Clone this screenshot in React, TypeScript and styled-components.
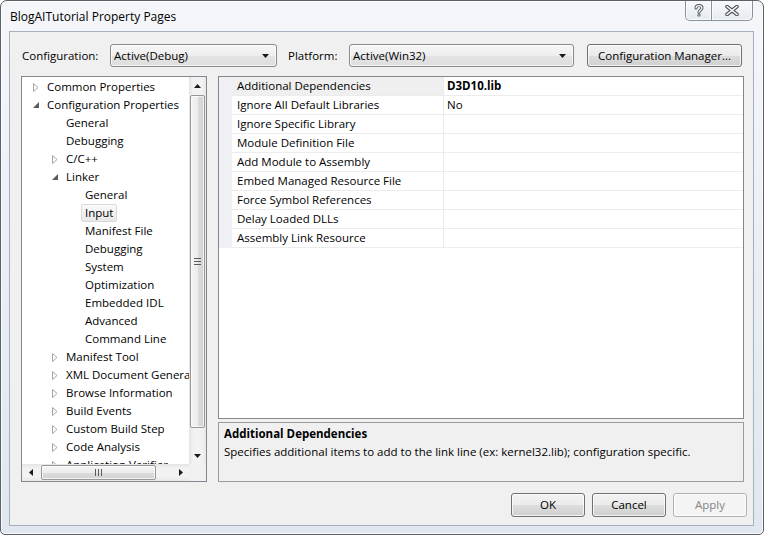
import styled, { createGlobalStyle } from 'styled-components'

const GlobalStyle = createGlobalStyle`
  html, body {
    margin: 0;
    padding: 0;
    background: #ffffff;
  }
  body {
    font-family: "Open Sans", "Noto Sans", sans-serif;
    font-size: 11.5px;
    color: #000;
  }
  * {
    box-sizing: border-box;
  }
`

const Window = styled.div`
  width: 764px;
  height: 535px;
  border: 1px solid #5b6169;
  border-radius: 7px 7px 5px 5px;
  background: linear-gradient(#f4f6fa, #e1e7ef);
  box-shadow: inset 0 0 0 1px rgba(255, 255, 255, 0.8);
  display: flex;
  flex-direction: column;
  overflow: hidden;
`

const TitleBar = styled.div`
  height: 30px;
  flex: none;
  display: flex;
  justify-content: space-between;
  align-items: flex-start;
`

const Title = styled.div`
  padding: 8px 0 0 9px;
  line-height: 16px;
  font-size: 12px;
`

const CaptionGroup = styled.div`
  display: flex;
  margin-right: 10px;
  margin-top: -1px;
`

const CaptionButton = styled.div<{ $w: number; $last?: boolean }>`
  width: ${p => p.$w}px;
  height: 21px;
  border: 1px solid #8c929b;
  border-top: none;
  border-left: ${p => (p.$last ? 'none' : '1px solid #8c929b')};
  border-radius: ${p => (p.$last ? '0 0 5px 0' : '0 0 0 5px')};
  background: linear-gradient(#f7f9fc, #e6ebf2);
  box-shadow: inset 0 0 0 1px rgba(255, 255, 255, 0.7);
  display: flex;
  align-items: center;
  justify-content: center;
  padding-top: 1px;
`

const Client = styled.div`
  flex: 1;
  margin: 0 9px 8px 8px;
  border: 1px solid #a6b0bc;
  background: #f0f0f0;
  display: flex;
  flex-direction: column;
`

const ConfigRow = styled.div`
  display: flex;
  align-items: center;
  height: 23px;
  margin-top: 12px;
  padding-left: 12px;
`

const FieldLabel = styled.span<{ $w: number; $gap?: number }>`
  width: ${p => p.$w}px;
  margin-left: ${p => p.$gap ?? 0}px;
  flex: none;
  white-space: nowrap;
`

const Combo = styled.div<{ $w: number }>`
  width: ${p => p.$w}px;
  height: 23px;
  flex: none;
  border: 1px solid #8a8a8a;
  border-radius: 3px;
  background: linear-gradient(#f7f7f7, #eeeeee 50%, #e4e4e4 51%, #dedede);
  box-shadow: inset 0 0 0 1px rgba(255, 255, 255, 0.7);
  display: flex;
  align-items: center;
  justify-content: space-between;
  padding: 0 7px 0 3px;
  line-height: 16px;
`

const PushButton = styled.div<{ $w: number; $gap?: number; $disabled?: boolean }>`
  width: ${p => p.$w}px;
  height: ${p => (p.$gap === undefined ? 24 : 23)}px;
  margin-left: ${p => p.$gap ?? 0}px;
  flex: none;
  border: 1px solid ${p => (p.$disabled ? '#adb2b5' : '#707070')};
  border-radius: 3px;
  background: ${p =>
    p.$disabled
      ? '#f4f4f4'
      : 'linear-gradient(#f2f2f2, #ebebeb 50%, #dddddd 51%, #cfcfcf)'};
  box-shadow: inset 0 0 0 1px rgba(255, 255, 255, 0.75);
  color: ${p => (p.$disabled ? '#838383' : '#000')};
  display: flex;
  align-items: center;
  justify-content: center;
  line-height: 16px;
`

const Main = styled.div`
  display: flex;
  height: 406px;
  margin-top: 9px;
  padding-left: 11px;
  gap: 11px;
`

const TreeBox = styled.div`
  width: 186px;
  flex: none;
  border: 1px solid #828790;
  background: #fff;
  display: grid;
  grid-template-columns: 1fr 17px;
  grid-template-rows: 1fr 17px;
  overflow: hidden;
`

const TreeList = styled.div`
  overflow: hidden;
  padding-top: 1px;
`

const TreeRow = styled.div<{ $level: number }>`
  height: 18px;
  display: flex;
  align-items: center;
  padding-left: ${p => 6 + p.$level * 19}px;
  white-space: nowrap;
`

const ExpandSlot = styled.span`
  width: 15px;
  flex: none;
  display: flex;
  align-items: center;
  justify-content: center;
`

const ItemLabel = styled.span<{ $selected?: boolean }>`
  height: 18px;
  line-height: 16px;
  padding: 0 3px;
  border: 1px solid ${p => (p.$selected ? '#d9d9d9' : 'transparent')};
  border-radius: 2px;
  background: ${p => (p.$selected ? 'linear-gradient(#fafafa, #e8e8e8)' : 'transparent')};
`

const VScroll = styled.div`
  display: flex;
  flex-direction: column;
  background: linear-gradient(to right, #e4e4e4, #f2f2f2 25%, #f2f2f2 75%, #e8e8e8);
`

const HScroll = styled.div`
  display: flex;
  background: linear-gradient(#e4e4e4, #f2f2f2 25%, #f2f2f2 75%, #e8e8e8);
`

const ScrollArrow = styled.div`
  width: 17px;
  height: 17px;
  flex: none;
  display: flex;
  align-items: center;
  justify-content: center;
`

const Track = styled.div<{ $horizontal?: boolean }>`
  flex: 1;
  display: flex;
  flex-direction: ${p => (p.$horizontal ? 'row' : 'column')};
  padding: ${p => (p.$horizontal ? '1px 0 1px 2px' : '1px 1px 0 1px')};
`

const Thumb = styled.div<{ $horizontal?: boolean; $size: number }>`
  ${p => (p.$horizontal ? 'width' : 'height')}: ${p => p.$size}px;
  flex: none;
  border: 1px solid #979797;
  border-radius: 2px;
  background: ${p =>
    p.$horizontal
      ? 'linear-gradient(#f5f5f5, #ececec 50%, #dcdcdc 51%, #d2d2d2)'
      : 'linear-gradient(to right, #f5f5f5, #ececec 50%, #dcdcdc 51%, #d2d2d2)'};
  box-shadow: inset 0 0 0 1px rgba(255, 255, 255, 0.7);
  display: flex;
  align-items: center;
  justify-content: center;
`

const Corner = styled.div`
  background: #f0f0f0;
`

const RightColumn = styled.div`
  width: 526px;
  flex: none;
  display: flex;
  flex-direction: column;
  gap: 3px;
`

const PropGrid = styled.div`
  height: 343px;
  flex: none;
  border: 1px solid #828790;
  background: #fff;
`

const PropRow = styled.div`
  display: grid;
  grid-template-columns: 13px 211px 1fr;
  height: 19px;
`

const Gutter = styled.div`
  background: #eef0f3;
`

const PropName = styled.div<{ $selected?: boolean }>`
  border-bottom: 1px solid #ececec;
  background: ${p => (p.$selected ? '#efefef' : '#fff')};
  padding-left: 5px;
  line-height: 18px;
  white-space: nowrap;
`

const PropValue = styled.div<{ $bold?: boolean }>`
  border-bottom: 1px solid #ececec;
  border-left: 1px solid #ececec;
  padding-left: 3px;
  line-height: 18px;
  font-weight: ${p => (p.$bold ? 700 : 400)};
`

const Description = styled.div`
  height: 60px;
  flex: none;
  border: 1px solid #9c9c9c;
  padding: 2px 6px 0 5px;
  line-height: 18px;
`

const DescTitle = styled.div`
  font-weight: 700;
`

const ButtonRow = styled.div`
  display: flex;
  justify-content: flex-end;
  gap: 7px;
  margin-top: 11px;
  padding-right: 6px;
`

type TreeItem = { label: string; level: number; state?: 'open' | 'closed'; selected?: boolean }

const treeItems: TreeItem[] = [
  { label: 'Common Properties', level: 0, state: 'closed' },
  { label: 'Configuration Properties', level: 0, state: 'open' },
  { label: 'General', level: 1 },
  { label: 'Debugging', level: 1 },
  { label: 'C/C++', level: 1, state: 'closed' },
  { label: 'Linker', level: 1, state: 'open' },
  { label: 'General', level: 2 },
  { label: 'Input', level: 2, selected: true },
  { label: 'Manifest File', level: 2 },
  { label: 'Debugging', level: 2 },
  { label: 'System', level: 2 },
  { label: 'Optimization', level: 2 },
  { label: 'Embedded IDL', level: 2 },
  { label: 'Advanced', level: 2 },
  { label: 'Command Line', level: 2 },
  { label: 'Manifest Tool', level: 1, state: 'closed' },
  { label: 'XML Document Generator', level: 1, state: 'closed' },
  { label: 'Browse Information', level: 1, state: 'closed' },
  { label: 'Build Events', level: 1, state: 'closed' },
  { label: 'Custom Build Step', level: 1, state: 'closed' },
  { label: 'Code Analysis', level: 1, state: 'closed' },
  { label: 'Application Verifier', level: 1, state: 'closed' },
]

const properties = [
  { name: 'Additional Dependencies', value: 'D3D10.lib', selected: true },
  { name: 'Ignore All Default Libraries', value: 'No' },
  { name: 'Ignore Specific Library', value: '' },
  { name: 'Module Definition File', value: '' },
  { name: 'Add Module to Assembly', value: '' },
  { name: 'Embed Managed Resource File', value: '' },
  { name: 'Force Symbol References', value: '' },
  { name: 'Delay Loaded DLLs', value: '' },
  { name: 'Assembly Link Resource', value: '' },
]

const Expander = ({ state }: { state?: 'open' | 'closed' }) => {
  if (state === 'closed')
    return (
      <svg width="6" height="9" viewBox="0 0 6 9">
        <path d="M0.5 0.5 L5 4.5 L0.5 8.5 Z" fill="#fff" stroke="#a6a6a6" />
      </svg>
    )
  if (state === 'open')
    return (
      <svg width="6" height="6" viewBox="0 0 6 6">
        <path d="M6 0 L6 6 L0 6 Z" fill="#5a5a5a" />
      </svg>
    )
  return null
}

const Arrow = ({ dir }: { dir: 'up' | 'down' | 'left' | 'right' }) => {
  const paths = {
    up: 'M0 4 L3.5 0 L7 4 Z',
    down: 'M0 0 L7 0 L3.5 4 Z',
    left: 'M4 0 L4 7 L0 3.5 Z',
    right: 'M0 0 L4 3.5 L0 7 Z',
  }
  const horiz = dir === 'left' || dir === 'right'
  return (
    <svg width={horiz ? 4 : 7} height={horiz ? 7 : 4} viewBox={horiz ? '0 0 4 7' : '0 0 7 4'}>
      <path d={paths[dir]} fill="#1a1a1a" />
    </svg>
  )
}

const Grip = ({ horizontal }: { horizontal?: boolean }) =>
  horizontal ? (
    <svg width="7" height="7" viewBox="0 0 7 7">
      <path d="M0.5 0 V7 M3.5 0 V7 M6.5 0 V7" stroke="#5a5a5a" strokeWidth="1" />
    </svg>
  ) : (
    <svg width="7" height="7" viewBox="0 0 7 7">
      <path d="M0 0.5 H7 M0 3.5 H7 M0 6.5 H7" stroke="#5a5a5a" strokeWidth="1" />
    </svg>
  )

const HelpGlyph = () => (
  <svg width="10" height="13" viewBox="0 0 10 13">
    <path
      d="M2 4 C2 0.8 8 0.8 8 4 C8 6 5 6 5 8.2"
      fill="none"
      stroke="#4b5058"
      strokeWidth="3"
      strokeLinecap="round"
    />
    <circle cx="5" cy="11" r="1.6" fill="#4b5058" />
    <path
      d="M2 4 C2 0.8 8 0.8 8 4 C8 6 5 6 5 8.2"
      fill="none"
      stroke="#fff"
      strokeWidth="1.2"
      strokeLinecap="round"
    />
    <circle cx="5" cy="11" r="0.7" fill="#fff" />
  </svg>
)

const CloseGlyph = () => (
  <svg width="14" height="11" viewBox="0 0 14 11">
    <path d="M2 1.5 L12 9.5 M12 1.5 L2 9.5" stroke="#4b5058" strokeWidth="3.6" strokeLinecap="round" />
    <path d="M2 1.5 L12 9.5 M12 1.5 L2 9.5" stroke="#fff" strokeWidth="1.6" strokeLinecap="round" />
  </svg>
)

const App = () => {
  return (
    <>
      <GlobalStyle />
      <Window>
        <TitleBar>
          <Title>BlogAITutorial Property Pages</Title>
          <CaptionGroup>
            <CaptionButton $w={27}>
              <HelpGlyph />
            </CaptionButton>
            <CaptionButton $w={41} $last>
              <CloseGlyph />
            </CaptionButton>
          </CaptionGroup>
        </TitleBar>
        <Client>
          <ConfigRow>
            <FieldLabel $w={88}>Configuration:</FieldLabel>
            <Combo $w={167}>
              <span>Active(Debug)</span>
              <Arrow dir="down" />
            </Combo>
            <FieldLabel $w={61} $gap={11}>
              Platform:
            </FieldLabel>
            <Combo $w={225}>
              <span>Active(Win32)</span>
              <Arrow dir="down" />
            </Combo>
            <PushButton $w={155} $gap={13}>
              Configuration Manager...
            </PushButton>
          </ConfigRow>

          <Main>
            <TreeBox>
              <TreeList>
                {treeItems.map((item, i) => (
                  <TreeRow key={i} $level={item.level}>
                    <ExpandSlot>
                      <Expander state={item.state} />
                    </ExpandSlot>
                    <ItemLabel $selected={item.selected}>{item.label}</ItemLabel>
                  </TreeRow>
                ))}
              </TreeList>
              <VScroll>
                <ScrollArrow>
                  <Arrow dir="up" />
                </ScrollArrow>
                <Track>
                  <Thumb $size={333}>
                    <Grip />
                  </Thumb>
                </Track>
                <ScrollArrow>
                  <Arrow dir="down" />
                </ScrollArrow>
              </VScroll>
              <HScroll>
                <ScrollArrow>
                  <Arrow dir="left" />
                </ScrollArrow>
                <Track $horizontal>
                  <Thumb $horizontal $size={115}>
                    <Grip horizontal />
                  </Thumb>
                </Track>
                <ScrollArrow>
                  <Arrow dir="right" />
                </ScrollArrow>
              </HScroll>
              <Corner />
            </TreeBox>

            <RightColumn>
              <PropGrid>
                {properties.map(p => (
                  <PropRow key={p.name}>
                    <Gutter />
                    <PropName $selected={p.selected}>{p.name}</PropName>
                    <PropValue $bold={p.selected}>{p.value}</PropValue>
                  </PropRow>
                ))}
              </PropGrid>
              <Description>
                <DescTitle>Additional Dependencies</DescTitle>
                <div>Specifies additional items to add to the link line (ex: kernel32.lib); configuration specific.</div>
              </Description>
            </RightColumn>
          </Main>

          <ButtonRow>
            <PushButton $w={74}>OK</PushButton>
            <PushButton $w={74}>Cancel</PushButton>
            <PushButton $w={74} $disabled>
              Apply
            </PushButton>
          </ButtonRow>
        </Client>
      </Window>
    </>
  )
}

export default App
